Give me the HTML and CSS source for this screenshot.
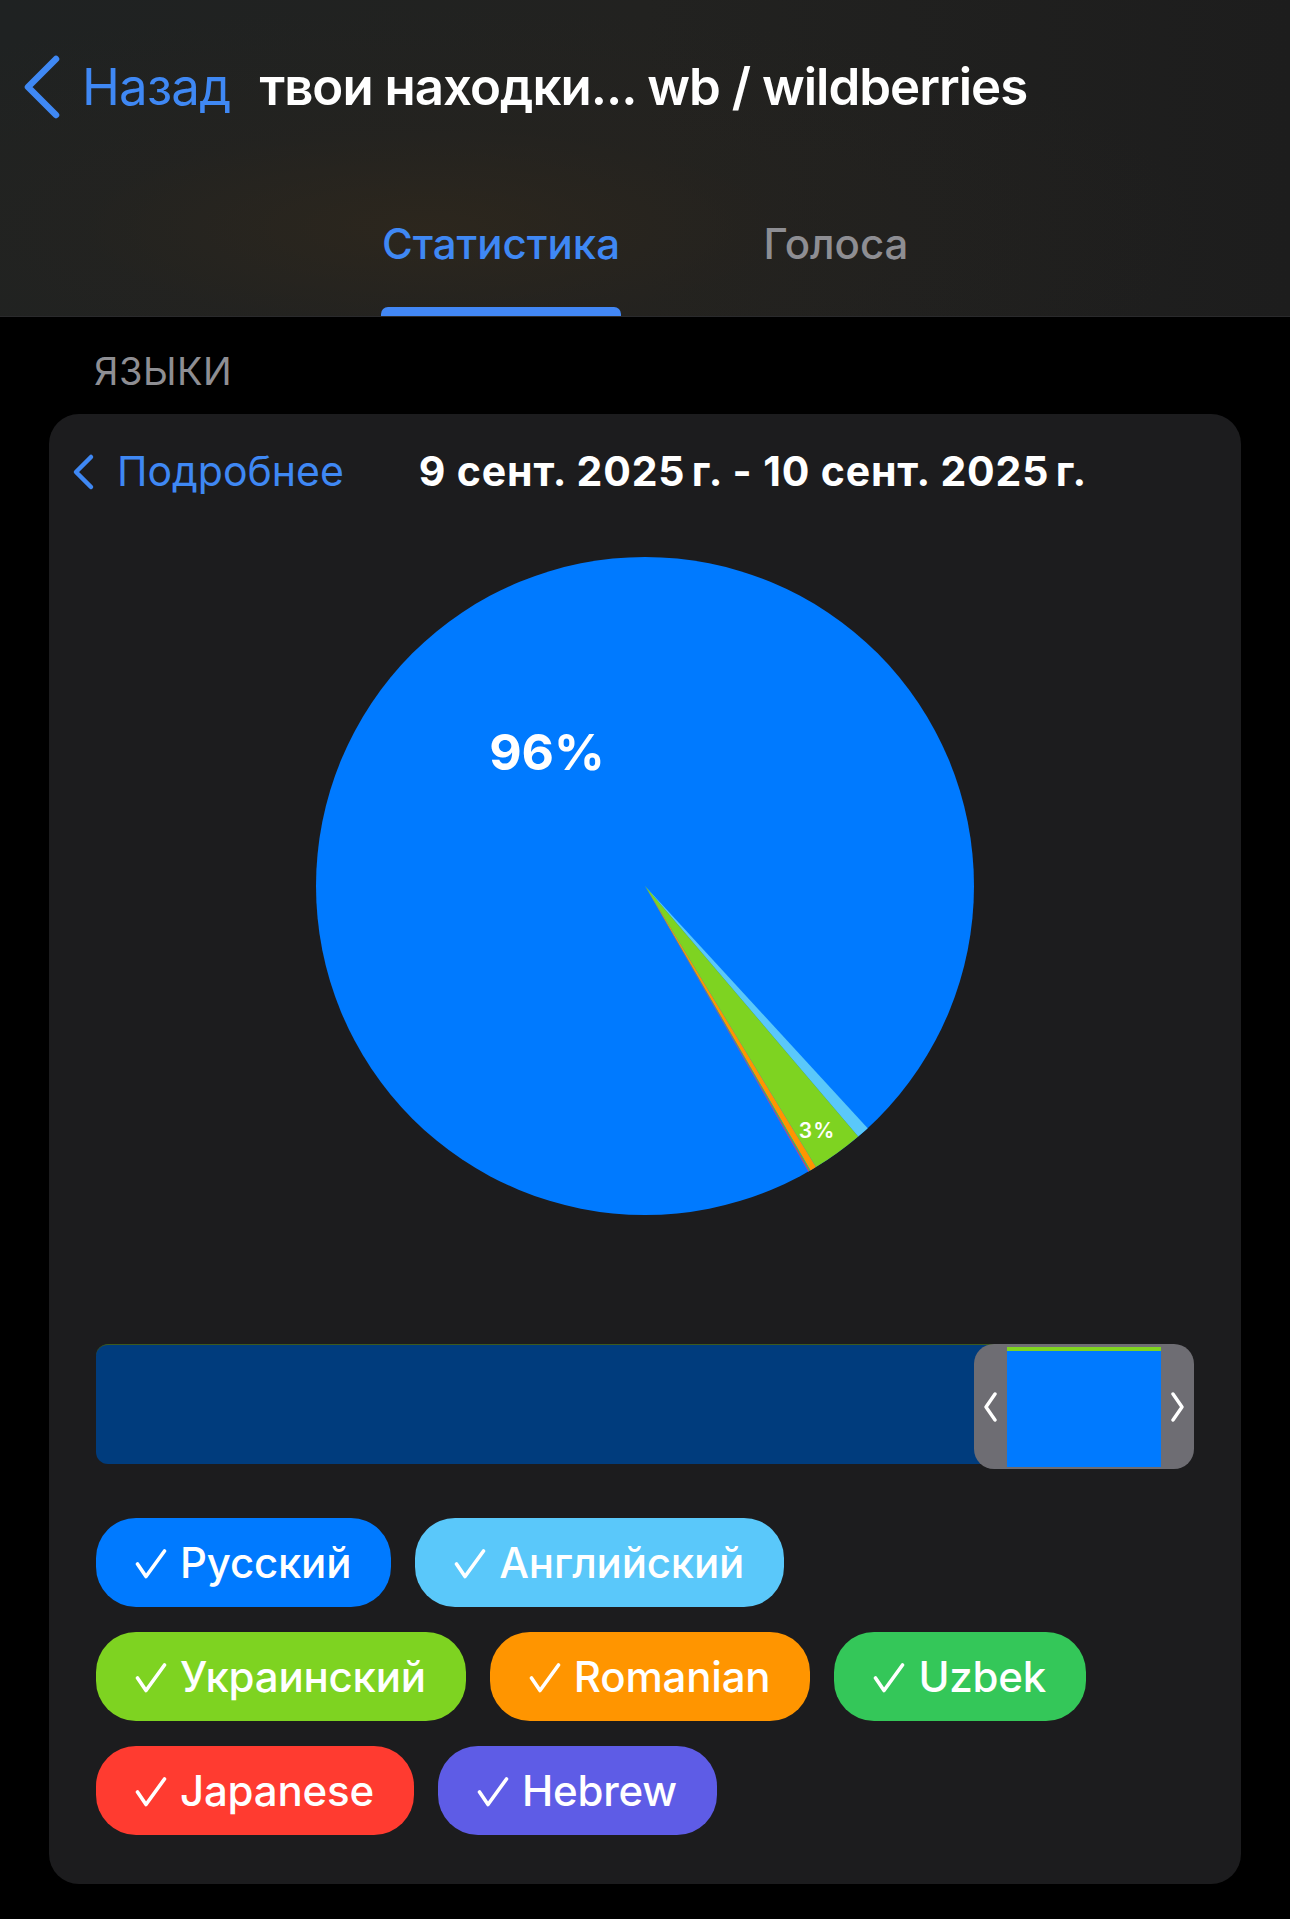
FILE: index.html
```html
<!DOCTYPE html>
<html lang="ru">
<head>
<meta charset="utf-8">
<title>Статистика</title>
<link rel="stylesheet" href="styles.css">
</head>
<body>
<header class="topbar">
  <div class="nav">
    <svg class="back-chev" width="44" height="68" viewBox="0 0 44 68"><path d="M36 6 L8 34 L36 62" fill="none" stroke="#3f88f4" stroke-width="6.5" stroke-linecap="round" stroke-linejoin="round"/></svg>
    <span class="back-text">Назад</span>
    <span class="title">твои находки... wb / wildberries</span>
  </div>
  <nav class="tabs">
    <div class="tab tab-active"><span class="tab-label">Статистика</span><span class="tab-line"></span></div>
    <div class="tab"><span class="tab-label">Голоса</span></div>
  </nav>
</header>

<main class="content">
  <div class="section-label">ЯЗЫКИ</div>
  <section class="card">
    <div class="card-head">
      <svg class="more-chev" width="30" height="44" viewBox="0 0 30 44"><path d="M22 7 L7 22 L22 37" fill="none" stroke="#3f88f4" stroke-width="4.5" stroke-linecap="round" stroke-linejoin="round"/></svg>
      <span class="more-text">Подробнее</span>
      <span class="date-range">9 сент. 2025&#8239;г. - 10 сент. 2025&#8239;г.</span>
    </div>

    <svg class="pie" width="658" height="658" viewBox="0 0 658 658">
      <circle cx="329" cy="329" r="329" fill="#007aff"/>
      <path d="M329 329 L551.7 571.2 A329 329 0 0 1 542.2 579.5 Z" fill="#5ac8fa"/>
      <path d="M329 329 L542.2 579.5 A329 329 0 0 1 499.9 610.1 Z" fill="#7ed321"/>
      <path d="M329 329 L499.9 610.1 A329 329 0 0 1 494.5 613.4 Z" fill="#ff9500"/>
      <path d="M329 329 L494.5 613.4 A329 329 0 0 1 493.4 614 Z" fill="#34c759"/>
      <path d="M329 329 L493.4 614 A329 329 0 0 1 492.6 614.4 Z" fill="#ff3b30"/>
      <path d="M329 329 L492.6 614.4 A329 329 0 0 1 492 614.7 Z" fill="#5e5ce6"/>
      <text class="pie-big" x="231" y="213" text-anchor="middle">96%</text>
      <text class="pie-small" x="501" y="581" text-anchor="middle">3%</text>
    </svg>

    <div class="range">
      <div class="range-track"></div>
      <div class="range-handle">
        <svg class="h-chev h-left" width="16" height="30" viewBox="0 0 16 30"><path d="M13 2 L4 15 L13 28" fill="none" stroke="#fff" stroke-width="3.4" stroke-linecap="round" stroke-linejoin="round"/></svg>
        <div class="range-window"></div>
        <svg class="h-chev h-right" width="16" height="30" viewBox="0 0 16 30"><path d="M3 2 L12 15 L3 28" fill="none" stroke="#fff" stroke-width="3.4" stroke-linecap="round" stroke-linejoin="round"/></svg>
      </div>
    </div>

    <div class="chips">
      <div class="chip-row">
        <span class="chip c-ru"><svg class="tick" width="32" height="30" viewBox="0 0 32 30"><path d="M2.5 15 L11 27.5 L29.5 2" fill="none" stroke="#fff" stroke-width="3.6" stroke-linecap="round" stroke-linejoin="round"/></svg>Русский</span>
        <span class="chip c-en"><svg class="tick" width="32" height="30" viewBox="0 0 32 30"><path d="M2.5 15 L11 27.5 L29.5 2" fill="none" stroke="#fff" stroke-width="3.6" stroke-linecap="round" stroke-linejoin="round"/></svg>Английский</span>
      </div>
      <div class="chip-row">
        <span class="chip c-uk"><svg class="tick" width="32" height="30" viewBox="0 0 32 30"><path d="M2.5 15 L11 27.5 L29.5 2" fill="none" stroke="#fff" stroke-width="3.6" stroke-linecap="round" stroke-linejoin="round"/></svg>Украинский</span>
        <span class="chip c-ro"><svg class="tick" width="32" height="30" viewBox="0 0 32 30"><path d="M2.5 15 L11 27.5 L29.5 2" fill="none" stroke="#fff" stroke-width="3.6" stroke-linecap="round" stroke-linejoin="round"/></svg>Romanian</span>
        <span class="chip c-uz"><svg class="tick" width="32" height="30" viewBox="0 0 32 30"><path d="M2.5 15 L11 27.5 L29.5 2" fill="none" stroke="#fff" stroke-width="3.6" stroke-linecap="round" stroke-linejoin="round"/></svg>Uzbek</span>
      </div>
      <div class="chip-row">
        <span class="chip c-ja"><svg class="tick" width="32" height="30" viewBox="0 0 32 30"><path d="M2.5 15 L11 27.5 L29.5 2" fill="none" stroke="#fff" stroke-width="3.6" stroke-linecap="round" stroke-linejoin="round"/></svg>Japanese</span>
        <span class="chip c-he"><svg class="tick" width="32" height="30" viewBox="0 0 32 30"><path d="M2.5 15 L11 27.5 L29.5 2" fill="none" stroke="#fff" stroke-width="3.6" stroke-linecap="round" stroke-linejoin="round"/></svg>Hebrew</span>
      </div>
    </div>
  </section>
</main>
</body>
</html>
```

FILE: styles.css
```css
* { box-sizing: border-box; }
html, body { margin: 0; padding: 0; }
body {
  width: 1290px;
  min-height: 1919px;
  background: #000;
  font-family: Inter, "Noto Sans", "DejaVu Sans", sans-serif;
  color: #fff;
}

.topbar {
  height: 317px;
  padding-top: 56px;
  background:
    radial-gradient(ellipse 60% 70% at 33% 72%, rgba(48,40,28,0.75) 0%, rgba(40,36,30,0.35) 45%, rgba(0,0,0,0) 100%),
    linear-gradient(90deg, #1f2222 0%, #222220 50%, #1d1d1d 100%);
  border-bottom: 1px solid #2a2a2c;
}

.nav {
  display: flex;
  align-items: center;
  height: 62px;
  padding-left: 20px;
}
.back-chev { display: block; flex: none; }
.back-text {
  margin-left: 18px;
  font-size: 51px;
  line-height: 62px;
  color: #3f88f4;
  font-weight: 400;
  letter-spacing: -0.8px;
}
.title {
  margin-left: 29px;
  font-size: 51px;
  line-height: 62px;
  font-weight: 600;
  color: #fff;
  white-space: nowrap;
  letter-spacing: -1px;
}

.tabs {
  display: flex;
  margin-top: 100px;
  padding-left: 381px;
  gap: 95px;
}
.tab {
  width: 240px;
  display: flex;
  flex-direction: column;
  align-items: center;
}
.tab-label {
  font-size: 42px;
  line-height: 51px;
  font-weight: 500;
  color: #8e8e93;
  white-space: nowrap;
}
.tab-active .tab-label { color: #3f88f4; }
.tab-line {
  display: block;
  width: 240px;
  height: 9px;
  margin-top: 38px;
  background: #4287f5;
  border-radius: 7px 7px 0 0;
}

.content { padding-top: 31px; }
.section-label {
  padding-left: 94px;
  font-size: 38px;
  line-height: 46px;
  color: #8e8e93;
  letter-spacing: 0.5px;
}

.card {
  margin: 20px 49px 0 49px;
  background: #1c1c1e;
  border-radius: 30px;
  padding: 34px 0 49px 0;
}

.card-head {
  display: flex;
  align-items: center;
  height: 47px;
  padding-left: 20px;
}
.more-chev { display: block; flex: none; }
.more-text {
  margin-left: 18px;
  font-size: 41px;
  line-height: 47px;
  color: #3f88f4;
}
.date-range {
  margin-left: 75px;
  font-size: 41px;
  line-height: 47px;
  font-weight: 700;
  color: #fff;
  white-space: nowrap;
  letter-spacing: 0.85px;
}

.pie {
  display: block;
  margin: 62px auto 0 auto;
}
.pie-big {
  font-family: Inter, "DejaVu Sans", sans-serif;
  font-size: 50px;
  font-weight: 700;
  fill: #fff;
}
.pie-small {
  font-family: Inter, "DejaVu Sans", sans-serif;
  font-size: 21px;
  font-weight: 600;
  fill: #fff;
  letter-spacing: 1px;
}

.range {
  position: relative;
  height: 125px;
  margin: 129px 47px 0 47px;
}
.range-track {
  margin-top: 3px;
  width: 900px;
  height: 120px;
  background: #003c7d;
  border-radius: 12px 0 0 12px;
  border-top: 1px solid #3c5a1e;
}
.range-handle {
  position: absolute;
  right: 0;
  top: 0;
  width: 220px;
  height: 125px;
  background: #6e6d73;
  border-radius: 20px;
  display: flex;
  align-items: center;
  padding-left: 33px;
}
.range-window {
  width: 154px;
  height: 120px;
  background: #007aff;
  border-top: 4px solid #7ed321;
}
.h-chev { position: absolute; top: 48px; }
.h-left { left: 8px; }
.h-right { right: 8px; }

.chips {
  margin: 49px 47px 0 47px;
  display: flex;
  flex-direction: column;
  gap: 25px;
}
.chip-row {
  display: flex;
  gap: 24px;
}
.chip {
  height: 89px;
  padding: 0 40px 0 39px;
  border-radius: 40px;
  display: flex;
  align-items: center;
  font-size: 42px;
  font-weight: 500;
  color: #fff;
  white-space: nowrap;
  letter-spacing: -0.2px;
}
.tick {
  display: block;
  flex: none;
  margin-right: 13px;
  margin-top: 2px;
}
.c-ru { background: #007aff; }
.c-en { background: #5ac8fa; }
.c-uk { background: #7ed321; }
.c-ro { background: #ff9500; }
.c-uz { background: #34c759; }
.c-ja { background: #ff3b30; }
.c-he { background: #5e5ce6; }
```
